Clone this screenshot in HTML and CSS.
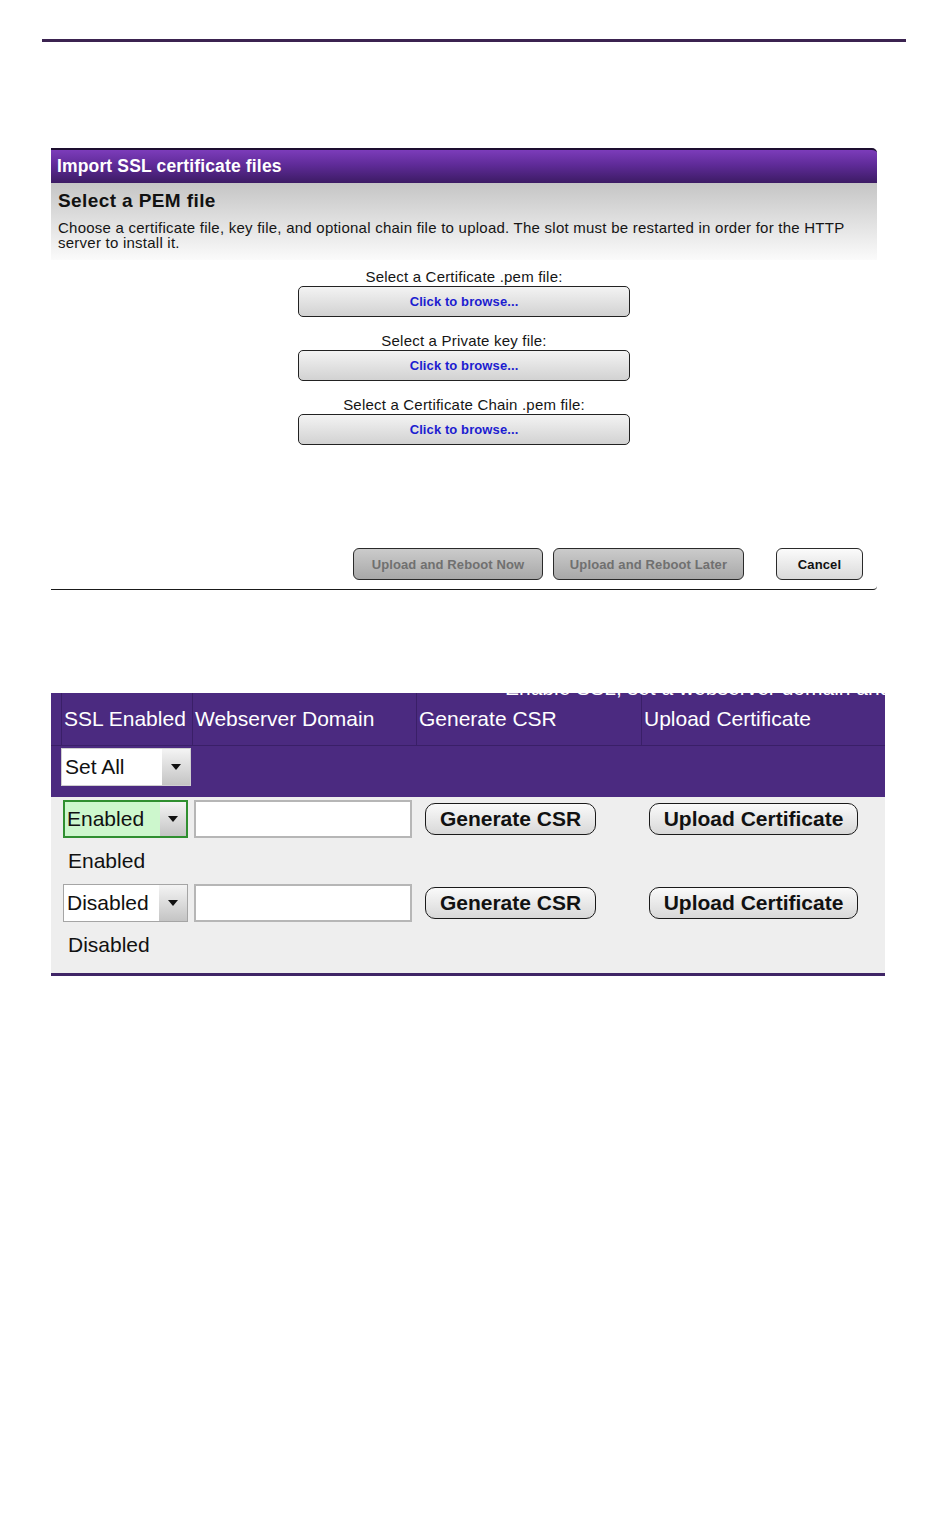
FILE: index.html
```html
<!DOCTYPE html>
<html>
<head>
<meta charset="utf-8">
<link rel="stylesheet" href="styles.css">
</head>
<body>
<div class="rule"></div>

<section class="import">
  <div class="import-head">Import SSL certificate files</div>
  <div class="intro">
    <h2>Select a PEM file</h2>
    <p>Choose a certificate file, key file, and optional chain file to upload. The slot must be restarted in order for the HTTP server to install it.</p>
  </div>
  <div class="files">
    <div class="file">
      <div class="file-label">Select a Certificate .pem file:</div>
      <div class="browse">Click to browse...</div>
    </div>
    <div class="file">
      <div class="file-label">Select a Private key file:</div>
      <div class="browse">Click to browse...</div>
    </div>
    <div class="file">
      <div class="file-label">Select a Certificate Chain .pem file:</div>
      <div class="browse">Click to browse...</div>
    </div>
  </div>
  <div class="actions">
    <button class="btn dim">Upload and Reboot Now</button>
    <button class="btn dim later">Upload and Reboot Later</button>
    <button class="btn cancel">Cancel</button>
  </div>
</section>

<section class="ssl">
  <div class="cut"><span>Enable SSL, set a webserver domain and upload a target certificate</span></div>
  <div class="hrow">
    <div class="lead"></div>
    <div class="hc">SSL Enabled</div>
    <div class="hc">Webserver Domain</div>
    <div class="hc">Generate CSR</div>
    <div class="hc">Upload Certificate</div>
  </div>
  <div class="setrow">
    <div class="sel setall"><span class="val">Set All</span><span class="arrow"><i></i></span></div>
  </div>
  <div class="ssl-body">
    <div class="row">
      <div class="lead"></div>
      <div class="cell c1"><div class="sel on"><span class="val">Enabled</span><span class="arrow"><i></i></span></div></div>
      <div class="cell c2"><div class="field"></div></div>
      <div class="cell c3"><button class="tbtn csr">Generate CSR</button></div>
      <div class="cell c4"><button class="tbtn up">Upload Certificate</button></div>
    </div>
    <div class="status">Enabled</div>
    <div class="row">
      <div class="lead"></div>
      <div class="cell c1"><div class="sel off"><span class="val">Disabled</span><span class="arrow"><i></i></span></div></div>
      <div class="cell c2"><div class="field"></div></div>
      <div class="cell c3"><button class="tbtn csr">Generate CSR</button></div>
      <div class="cell c4"><button class="tbtn up">Upload Certificate</button></div>
    </div>
    <div class="status">Disabled</div>
  </div>
</section>
</body>
</html>
```

FILE: styles.css
```css
body {
  margin: 0;
  background: #ffffff;
  font-family: "Liberation Sans", Arial, sans-serif;
  color: #111;
}

.rule {
  height: 3px;
  background: #3b2350;
  margin: 39px 44px 0 42px;
}

/* ---------- Import panel ---------- */
.import {
  margin: 106px 0 0 51px;
  width: 826px;
  border-bottom: 1px solid #1a1a1a;
  border-bottom-right-radius: 4px;
}

.import-head {
  height: 35px;
  box-sizing: border-box;
  border-top: 2px solid #1d0e30;
  border-top-right-radius: 5px;
  background: linear-gradient(#7c3cba, #5f2b98 45%, #3c1b64);
  color: #fff;
  font-weight: bold;
  font-size: 17.5px;
  letter-spacing: 0.15px;
  line-height: 33px;
  padding-left: 6px;
}

.intro {
  background: linear-gradient(#c5c5c5, #fbfbfb);
  padding: 7px 7px 10px;
}

.intro h2 {
  margin: 0;
  font-size: 19px;
  letter-spacing: 0.4px;
  line-height: 22px;
  font-weight: bold;
  color: #111;
}

.intro p {
  margin: 8px 0 0;
  font-size: 15px;
  letter-spacing: 0.24px;
  line-height: 15px;
  width: 805px;
  color: #151515;
}

.files {
  display: flex;
  flex-direction: column;
  align-items: center;
  gap: 16px;
  padding-top: 9px;
}

.file-label {
  font-size: 15px;
  letter-spacing: 0.2px;
  line-height: 16px;
  text-align: center;
  margin-bottom: 1px;
  color: #151515;
}

.browse {
  width: 332px;
  height: 31px;
  box-sizing: border-box;
  border: 1px solid #222;
  border-radius: 5px;
  background: linear-gradient(#f3f3f3, #d2d2d2);
  color: #1c1cd0;
  font-weight: bold;
  font-size: 13px;
  letter-spacing: 0.1px;
  display: flex;
  align-items: center;
  justify-content: center;
}

.actions {
  display: flex;
  justify-content: flex-end;
  padding: 103px 14px 9px 0;
}

.btn {
  height: 32px;
  box-sizing: border-box;
  border: 1px solid #2a2a2a;
  border-radius: 6px;
  font-family: "Liberation Sans", Arial, sans-serif;
  font-weight: bold;
  font-size: 13px;
  letter-spacing: 0.12px;
  padding: 0;
}

.btn.dim {
  width: 190px;
  background: linear-gradient(#cbcbcb, #a8a8a8);
  color: #707070;
}

.btn.later {
  width: 191px;
  margin-left: 10px;
}

.btn.cancel {
  width: 87px;
  margin-left: 32px;
  background: linear-gradient(#fbfbfb, #dadada);
  color: #111;
}

/* ---------- SSL table ---------- */
.ssl {
  margin: 103px 0 0 51px;
  width: 834px;
  position: relative;
}

.cut {
  position: absolute;
  top: 0;
  left: 454px;
  width: 380px;
  height: 5px;
  overflow: hidden;
  z-index: 1;
}

.cut span {
  display: block;
  margin-top: -15px;
  white-space: nowrap;
  color: #fff;
  font-size: 21px;
  line-height: 20px;
}

.hrow {
  display: grid;
  grid-template-columns: 10px 131px 224px 225px 244px;
  height: 53px;
  box-sizing: border-box;
  background: #4b2a80;
  border-bottom: 1px solid #3a1f68;
}

.hc {
  border-left: 1px solid #3a1f68;
  color: #fff;
  font-size: 21px;
  display: flex;
  align-items: center;
  padding-left: 2px;
  white-space: nowrap;
}

.setrow {
  height: 51px;
  box-sizing: border-box;
  background: #4b2a80;
  padding: 2px 0 0 10px;
}

.sel {
  display: flex;
  height: 38px;
  box-sizing: border-box;
  font-size: 21px;
  color: #111;
  background: #fff;
}

.sel .val {
  flex: 1;
  display: flex;
  align-items: center;
  padding-left: 3px;
}

.sel .arrow {
  width: 28px;
  display: flex;
  align-items: center;
  justify-content: center;
  background: linear-gradient(#f4f4f4, #c4c4c4);
}

.sel .arrow i {
  width: 0;
  height: 0;
  border-left: 5px solid transparent;
  border-right: 5px solid transparent;
  border-top: 6px solid #111;
}

.sel.setall {
  width: 130px;
  border: 1px solid #cfcfcf;
}

.sel.on {
  width: 125px;
  border: 2px solid #2f8f30;
  background: #cdf7cd;
}

.sel.on .val {
  padding-left: 2px;
}

.sel.on .arrow {
  width: 26px;
}

.sel.off {
  width: 125px;
  border: 1px solid #a5a5a5;
}

.ssl-body {
  background: #eeeeee;
  padding: 3px 0 5px;
  border-bottom: 3px solid #3f2566;
}

.row {
  display: grid;
  grid-template-columns: 10px 131px 224px 225px 244px;
  height: 38px;
  align-items: center;
}

.c1 { padding-left: 2px; }
.c2 { padding-left: 2px; }
.c3 { padding-left: 9px; }
.c4 { padding-left: 8px; }

.field {
  width: 218px;
  height: 38px;
  box-sizing: border-box;
  border: 2px solid #b6b6b6;
  background: #fff;
}

.tbtn {
  height: 32px;
  box-sizing: border-box;
  border: 1.5px solid #1a1a1a;
  border-radius: 10px;
  background: linear-gradient(#fafafa, #d8d8d8);
  font-family: "Liberation Sans", Arial, sans-serif;
  font-weight: bold;
  font-size: 21px;
  color: #111;
  padding: 0;
  display: block;
}

.tbtn.csr { width: 171px; }
.tbtn.up { width: 209px; }

.status {
  height: 46px;
  display: flex;
  align-items: center;
  padding-left: 17px;
  font-size: 21px;
  color: #111;
}
```
